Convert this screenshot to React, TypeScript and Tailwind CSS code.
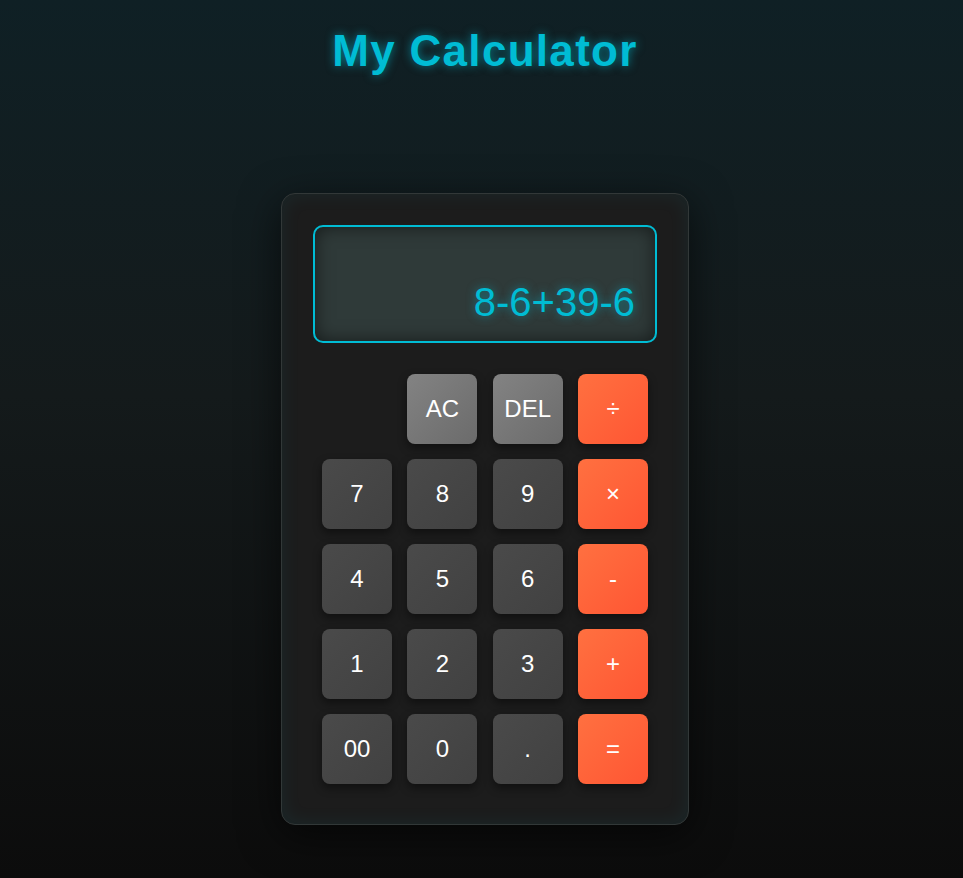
const rows: { label: string; kind: "num" | "fn" | "op" | "blank" }[][] = [
  [
    { label: "", kind: "blank" },
    { label: "AC", kind: "fn" },
    { label: "DEL", kind: "fn" },
    { label: "÷", kind: "op" },
  ],
  [
    { label: "7", kind: "num" },
    { label: "8", kind: "num" },
    { label: "9", kind: "num" },
    { label: "×", kind: "op" },
  ],
  [
    { label: "4", kind: "num" },
    { label: "5", kind: "num" },
    { label: "6", kind: "num" },
    { label: "-", kind: "op" },
  ],
  [
    { label: "1", kind: "num" },
    { label: "2", kind: "num" },
    { label: "3", kind: "num" },
    { label: "+", kind: "op" },
  ],
  [
    { label: "00", kind: "num" },
    { label: "0", kind: "num" },
    { label: ".", kind: "num" },
    { label: "=", kind: "op" },
  ],
];

const keyStyles = {
  num: "bg-gradient-to-br from-[#4a4a4a] to-[#414141]",
  fn: "bg-gradient-to-br from-[#838383] to-[#6b6b6b]",
  op: "bg-gradient-to-br from-[#ff7040] to-[#ff5533]",
};

export default function App() {
  return (
    <div className="min-h-screen bg-gradient-to-b from-[#0f2025] via-[#141a1b] via-45% to-[#0c0c0c] pl-[7px] font-['Liberation_Sans',Arial,sans-serif] text-white">
      <div className="flex flex-col items-center">
        {/* Title */}
        <h1 className="mt-[26px] text-[44px] leading-[1.15] font-bold tracking-[1.3px] text-[#00bcd4] [text-shadow:0_0_10px_rgba(0,188,212,0.6)]">
          My Calculator
        </h1>

        {/* Calculator body */}
        <div className="mt-[116px] w-[408px] rounded-[14px] border border-[#323838] bg-[#1c1c1c] px-[31px] pt-[31px] pb-[40px] shadow-[0_10px_40px_rgba(0,0,0,0.6),inset_0_0_20px_rgba(0,188,212,0.08)]">
          {/* Display */}
          <div className="flex h-[118px] items-end justify-end rounded-[10px] border-2 border-[#00bcd4] bg-[#2f3a39] px-5 pb-4 shadow-[inset_0_0_18px_rgba(0,0,0,0.55)]">
            <span className="text-[40px] leading-[1.15] text-[#00bcd4] [text-shadow:0_0_10px_rgba(0,188,212,0.55)]">
              8-6+39-6
            </span>
          </div>

          {/* Keys */}
          <div className="mx-auto mt-[31px] grid w-[326px] grid-cols-[repeat(4,70px)] justify-between gap-y-[15px]">
            {rows.flat().map((key, i) =>
              key.kind === "blank" ? (
                <div key={i} />
              ) : (
                <button
                  key={i}
                  className={`flex h-[70px] w-[70px] items-center justify-center rounded-lg text-[24px] text-white shadow-[0_4px_10px_rgba(0,0,0,0.45)] ${keyStyles[key.kind]}`}
                >
                  {key.label}
                </button>
              )
            )}
          </div>
        </div>
      </div>
    </div>
  );
}
